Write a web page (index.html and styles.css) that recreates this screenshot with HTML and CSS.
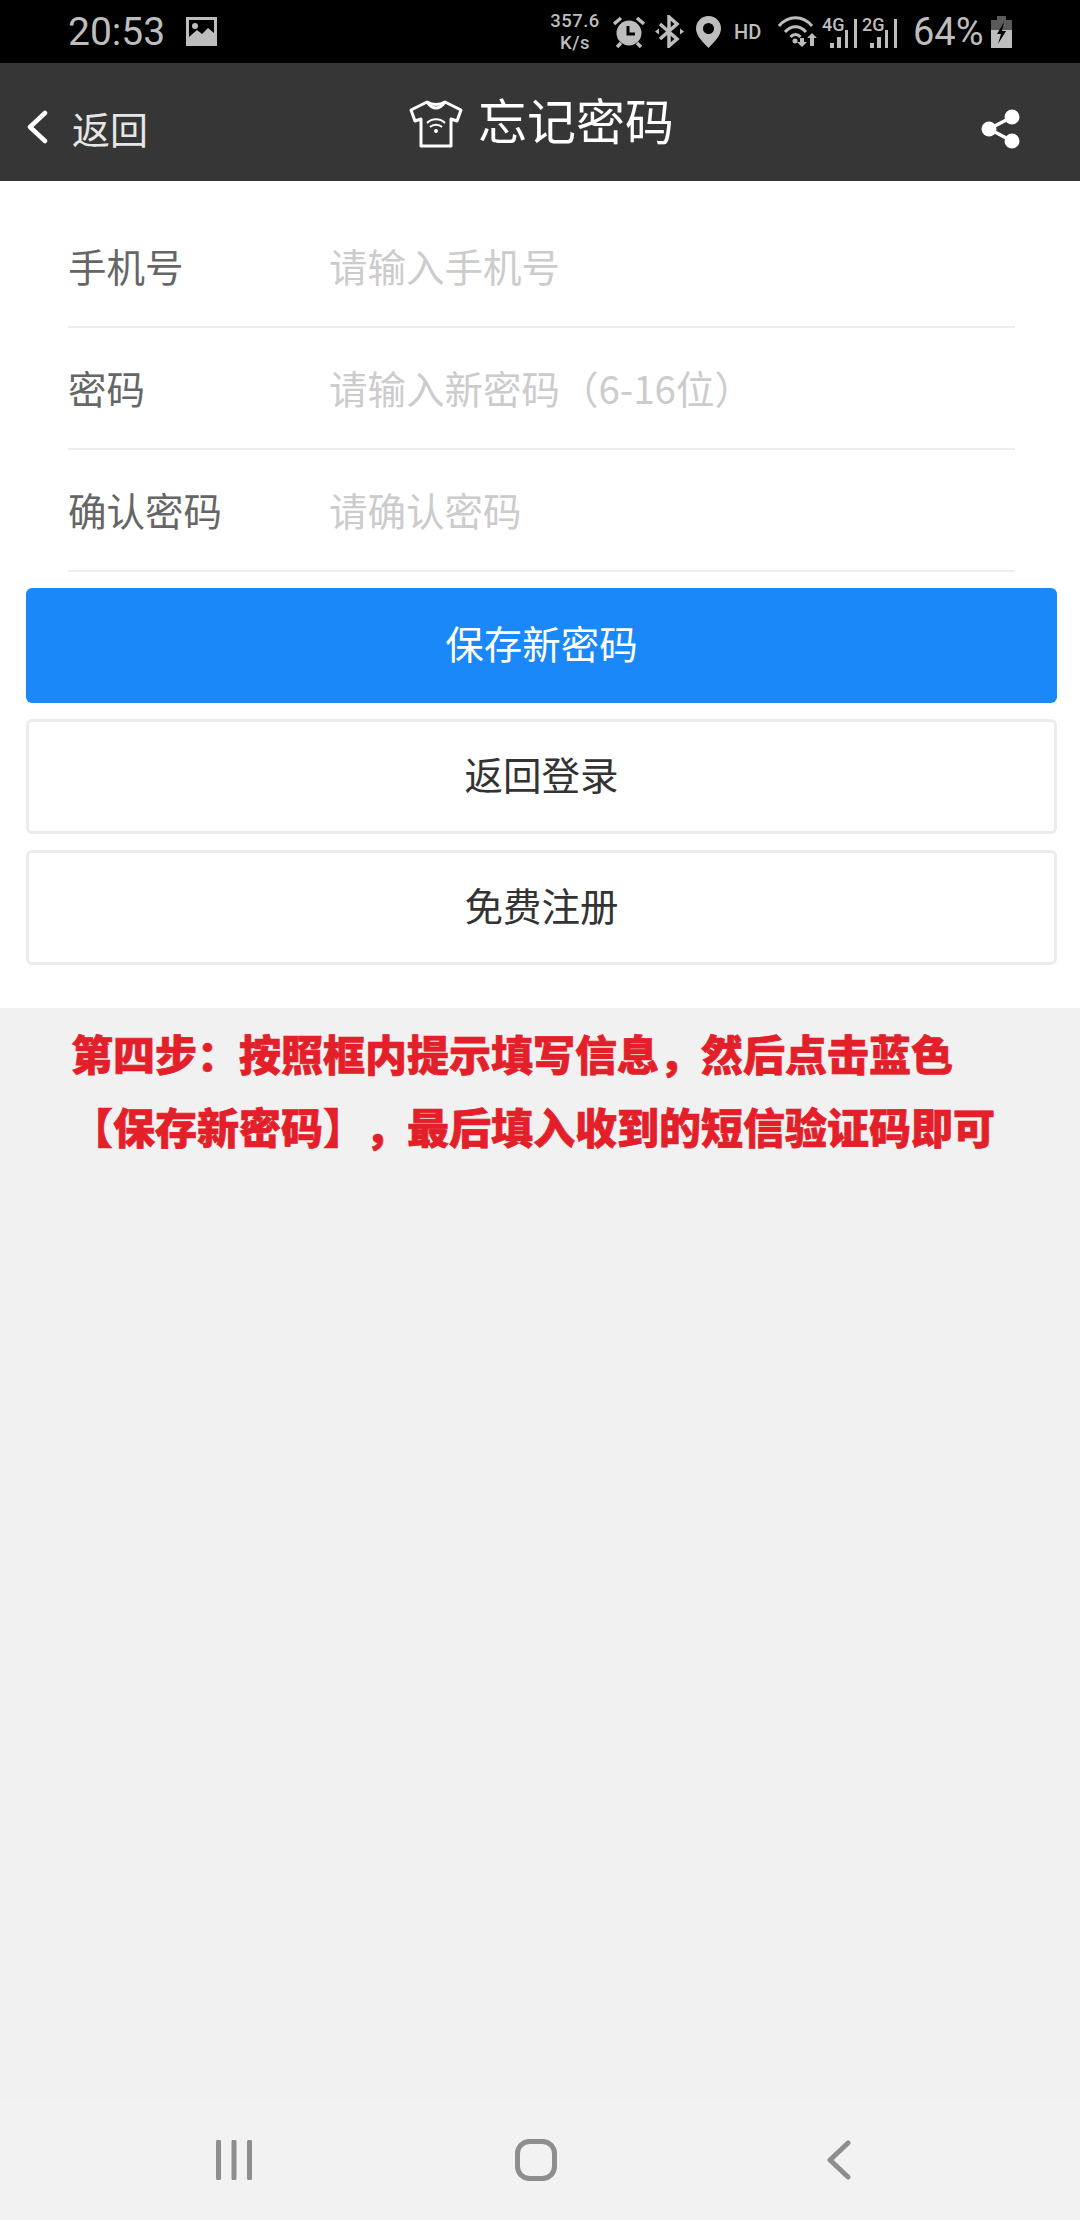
FILE: index.html
```html
<!DOCTYPE html>
<html lang="zh-CN">
<head>
  <meta charset="UTF-8" />
  <meta name="viewport" content="width=device-width, initial-scale=1.0" />
  <title>忘记密码</title>
  <link rel="stylesheet" href="styles.css">
</head>
<body>
  <div class="status-bar">
    <span class="clock">20:53</span>
    <svg class="ic-image" width="31" height="29" viewBox="0 0 31 29">
      <path fill="#bdbdbd" fill-rule="evenodd" d="M0 0h31v29H0z M3 3v17l8-7 5 4 6-6 6 5V3z"/>
      <circle cx="9" cy="9" r="3" fill="#bdbdbd"/>
    </svg>
    <span class="speed">357.6<br>K/s</span>
    <svg class="ic-alarm" width="32" height="32" viewBox="0 0 32 32">
      <circle cx="16" cy="17" r="12.5" fill="#bdbdbd"/>
      <path d="M15 10v8h7" fill="none" stroke="#000" stroke-width="3"/>
      <path d="M1 8l7-6M31 8l-7-6M4 31l4-4M28 31l-4-4" stroke="#bdbdbd" stroke-width="3.500"/>
    </svg>
    <svg class="ic-bt" width="29" height="33" viewBox="0 0 29 33">
      <path d="M5 9l17 15-8 7V2l8 7L5 24" fill="none" stroke="#bdbdbd" stroke-width="3.5"/>
      <path d="M0 16.500l4-3v6zM29 16.500l-4-3v6z" fill="#bdbdbd"/>
    </svg>
    <svg class="ic-pin" width="25" height="32" viewBox="0 0 25 32">
      <path fill="#bdbdbd" fill-rule="evenodd" d="M12.500 0C5.500 0 0 5.500 0 12.500 0 20 7 26 12.500 32 18 26 25 20 25 12.500 25 5.500 19.500 0 12.500 0z M12.500 7a5.500 5.500 0 1 1 0 11 5.500 5.500 0 0 1 0-11z"/>
    </svg>
    <span class="hd">HD</span>
    <svg class="ic-wifi" width="41" height="31" viewBox="0 0 41 31">
      <g fill="none" stroke="#bdbdbd" stroke-width="3">
        <path d="M1 10C10 -1 25 -1 34 10"/>
        <path d="M7 16c6-7 15-7 21 0"/>
        <path d="M12.500 21c3-3.500 7-3.500 10 0"/>
      </g>
      <circle cx="17" cy="25" r="2.500" fill="#bdbdbd"/>
      <path d="M22 22h4v4h3l-5 5-5-5h3zM32 30v-8h-3l5-5 5 5h-3v8z" fill="#bdbdbd"/>
    </svg>
    <svg class="ic-signal" width="36" height="36" viewBox="0 0 36 36">
      <text x="0" y="17.500" class="sig-label">4G</text>
      <rect x="8" y="30" width="4" height="5" fill="#bdbdbd"/>
      <rect x="15" y="24" width="4" height="11" fill="#bdbdbd"/>
      <rect x="23" y="17" width="3" height="18" fill="#bdbdbd"/>
      <rect x="32" y="6" width="3" height="29" fill="#bdbdbd"/>
    </svg>
    <svg class="ic-signal ic-signal-2" width="36" height="36" viewBox="0 0 36 36">
      <text x="0" y="17.500" class="sig-label">2G</text>
      <rect x="8" y="30" width="4" height="5" fill="#bdbdbd"/>
      <rect x="15" y="24" width="4" height="11" fill="#bdbdbd"/>
      <rect x="23" y="17" width="3" height="18" fill="#bdbdbd"/>
      <rect x="32" y="6" width="3" height="29" fill="#bdbdbd"/>
    </svg>
    <span class="battery-pct">64%</span>
    <svg class="ic-battery" width="21" height="32" viewBox="0 0 21 32">
      <path d="M6 0h9v4h6v10H0V4h6z" fill="#5a5a5a"/>
      <path d="M0 14h21v18H0z" fill="#bdbdbd"/>
      <path d="M13 6L6 18h4l-3 10 8-13h-4z" fill="#000"/>
    </svg>
  </div>

  <div class="header">
    <div class="back">
      <svg width="22" height="34" viewBox="0 0 22 34">
        <path d="M19 3L4 17l15 14" fill="none" stroke="#fff" stroke-width="4.500" stroke-linecap="round" stroke-linejoin="round"/>
      </svg>
      <span>返回</span>
    </div>
    <div class="title">
      <svg width="54" height="48" viewBox="0 0 54 48">
        <path d="M18 2Q27 7 36 2L52 10 48 21 42 19V46H12V19L6 21 2 10Z" fill="none" stroke="#fff" stroke-width="3" stroke-linejoin="round"/>
        <path d="M18 2Q27 14 36 2" fill="none" stroke="#fff" stroke-width="3"/>
        <g fill="none" stroke="#fff" stroke-width="2">
          <path d="M18 23c5-5 13-5 18 0"/>
          <path d="M21 27c3-3 9-3 12 0"/>
        </g>
        <circle cx="27" cy="31" r="2" fill="#fff"/>
      </svg>
      <span class="title-text">忘记密码</span>
    </div>
    <svg class="share" width="40" height="40" viewBox="0 0 40 40">
      <circle cx="8" cy="20" r="7.500" fill="#fff"/>
      <circle cx="31" cy="8" r="7.500" fill="#fff"/>
      <circle cx="31" cy="32" r="7.500" fill="#fff"/>
      <path d="M8 20L31 8M8 20l23 12" stroke="#fff" stroke-width="3.500"/>
    </svg>
  </div>

  <div class="form-box">
    <div class="row"><span class="label">手机号</span><span class="hint">请输入手机号</span></div>
    <div class="row"><span class="label">密码</span><span class="hint">请输入新密码（6-16位）</span></div>
    <div class="row"><span class="label">确认密码</span><span class="hint">请确认密码</span></div>
    <div class="btn btn-blue">保存新密码</div>
    <div class="btn">返回登录</div>
    <div class="btn">免费注册</div>
  </div>

  <div class="notes">
    第四步：按照框内提示填写信息，然后点击蓝色<br>
    【保存新密码】，最后填入收到的短信验证码即可
  </div>

  <div class="nav-bar">
    <svg width="36" height="40" viewBox="0 0 36 40">
      <path d="M2.500 2v36M18 2v36M33.500 2v36" stroke="#8e8e8e" stroke-width="5" stroke-linecap="round"/>
    </svg>
    <svg class="nav-home" width="42" height="42" viewBox="0 0 42 42">
      <rect x="2.500" y="2.500" width="37" height="37" rx="12" fill="none" stroke="#8e8e8e" stroke-width="5"/>
    </svg>
    <svg class="nav-back" width="26" height="40" viewBox="0 0 26 40">
      <path d="M22 3L4 20l18 17" fill="none" stroke="#8e8e8e" stroke-width="5" stroke-linecap="round" stroke-linejoin="round"/>
    </svg>
  </div>
</body>
</html>
```

FILE: styles.css
```css
* {
  box-sizing: border-box;
}
body {
  margin: 0;
  height: 2220px;
  display: flex;
  flex-direction: column;
  background-color: #f1f1f1;
  font-family: "Noto Sans CJK SC", "Noto Sans", sans-serif;
  text-spacing-trim: space-all;
  color: #333;
}

/* status bar */
.status-bar {
  height: 63px;
  flex-shrink: 0;
  background-color: #000;
  color: #bdbdbd;
  font-family: Roboto, sans-serif;
  display: flex;
  align-items: center;
  padding-left: 68px;
}
.clock {
  width: 118px;
  font-size: 39px;
}
.ic-image {
  margin-right: 330px;
}
.speed {
  width: 56px;
  margin-right: 10px;
  font-size: 18.5px;
  font-weight: 500;
  letter-spacing: 0.5px;
  line-height: 22px;
  text-align: center;
}
.ic-bt {
  margin-left: 10px;
}
.ic-pin {
  margin-left: 12px;
}
.hd {
  margin-left: 13px;
  width: 44px;
  font-size: 20px;
  font-weight: 500;
}
.ic-signal {
  margin-left: 3px;
  margin-top: -2px;
}
.ic-wifi {
  margin-top: -1px;
}
.ic-signal-2 {
  margin-left: 4px;
}
.sig-label {
  font-family: Roboto, sans-serif;
  font-size: 18px;
  font-weight: 500;
  fill: #bdbdbd;
}
.battery-pct {
  margin-left: 15px;
  width: 78px;
  font-size: 38px;
}

/* header */
.header {
  height: 118px;
  flex-shrink: 0;
  background-color: #363636;
  display: flex;
  align-items: center;
  justify-content: space-between;
  position: relative;
  padding: 10px 59px 0 26px;
}
.back {
  display: flex;
  align-items: center;
  gap: 24px;
  font-size: 38px;
  color: #e6e6e6;
}
.title {
  position: absolute;
  left: 409px;
  top: 37px;
  display: flex;
  align-items: flex-start;
  gap: 15px;
  color: #fff;
}
.title-text {
  margin-top: -7px;
  font-size: 49px;
  line-height: 52px;
}
.share {
  margin-top: 4px;
}

/* form */
.form-box {
  flex-shrink: 0;
  background-color: #fff;
  padding: 25px 23px 43px 26px;
}
.row {
  height: 122px;
  padding-bottom: 3px;
  margin: 0 42px;
  border-bottom: 2px solid #eeeeee;
  display: flex;
  align-items: center;
  font-size: 38.5px;
}
.label {
  width: 261px;
  color: #666;
}
.hint {
  color: #cccccc;
}
.btn {
  height: 115px;
  padding-bottom: 8px;
  margin-top: 16px;
  border: 3px solid #ececec;
  border-radius: 6px;
  display: flex;
  align-items: center;
  justify-content: center;
  font-size: 38.5px;
  color: #333;
}
.btn-blue {
  background-color: #1a88f8;
  border: none;
  color: #fff;
}

/* red instructions */
.notes {
  padding: 8px 0 0 71px;
  font-size: 42px;
  font-weight: 900;
  -webkit-text-stroke: 0.7px #e3202a;
  line-height: 73px;
  color: #e3202a;
  white-space: nowrap;
}

/* bottom nav */
.nav-bar {
  margin-top: auto;
  height: 120px;
  background-color: #f2f2f2;
  display: flex;
  align-items: center;
  padding-left: 216px;
}
.nav-home {
  margin-left: 263px;
}
.nav-back {
  margin-left: 269px;
}
```
